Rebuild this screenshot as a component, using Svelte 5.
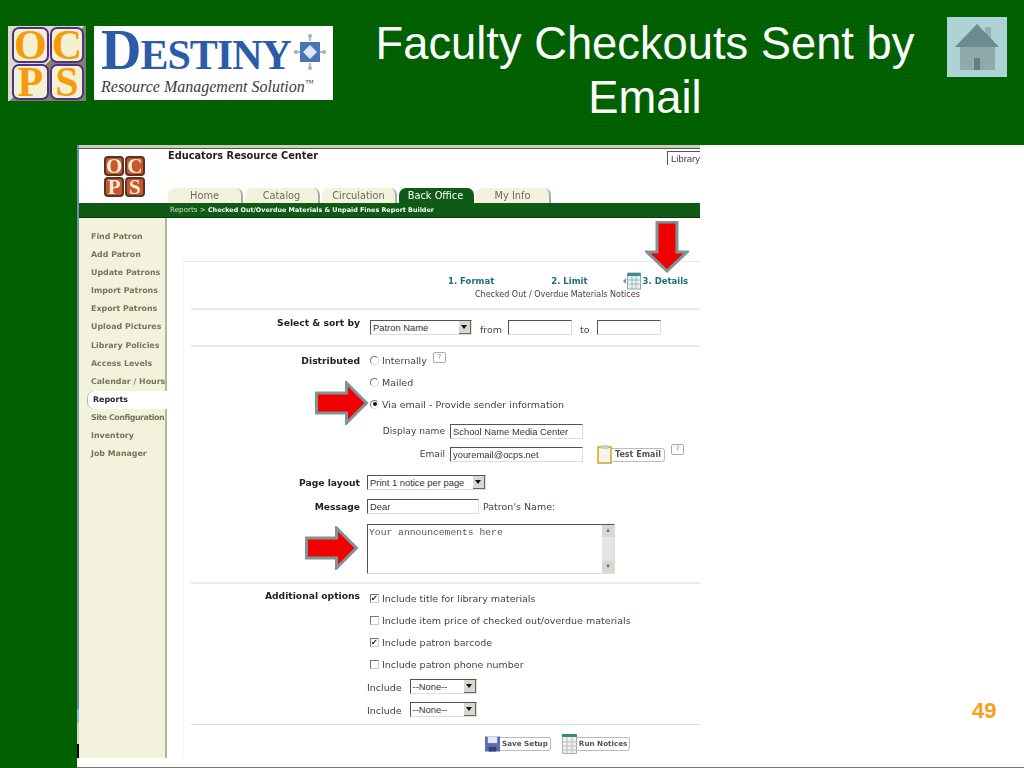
<script>
    const sideLinks = ['Find Patron', 'Add Patron', 'Update Patrons', 'Import Patrons', 'Export Patrons', 'Upload Pictures', 'Library Policies', 'Access Levels', 'Calendar / Hours', 'Reports', 'Site Configuration', 'Inventory', 'Job Manager'];
    const tabs = ['Home', 'Catalog', 'Circulation', 'Back Office', 'My Info'];
    const options = [
        { text: 'Include title for library materials', on: true },
        { text: 'Include item price of checked out/overdue materials', on: false },
        { text: 'Include patron barcode', on: true },
        { text: 'Include patron phone number', on: false }
    ];
</script>

<div class="slide">
    <header class="top">
        <div class="logos">
            <div class="ocps">
                <span>O</span><span>C</span><span>P</span><span>S</span>
            </div>
            <div class="destiny">
                <div class="word">
                    <span class="letters"><b>D</b>ESTINY</span>
                    <svg width="34" height="38" viewBox="0 0 34 38"><path d="M17 1v7M17 30v7M1 19h7M26 19h7" stroke="#8aa3cc" stroke-width="1.500"/><circle cx="17" cy="3" r="2" fill="#9db2d4"/><circle cx="17" cy="35" r="2" fill="#9db2d4"/><circle cx="3" cy="19" r="2" fill="#9db2d4"/><circle cx="31" cy="19" r="2" fill="#9db2d4"/><path d="M7 9h20v20H7z" fill="#4a74b8"/><path d="M17 12l7 7-7 7-7-7z" fill="#dfe7f3"/></svg>
                </div>
                <div class="tag">Resource Management Solution<sup>™</sup></div>
            </div>
        </div>
        <h1>Faculty Checkouts Sent by Email</h1>
        <div class="home">
            <svg width="60" height="60" viewBox="0 0 60 60">
                <rect width="60" height="60" fill="#add3d6"/>
                <path d="M38 10h6v12h-6z" fill="#8fb0b4"/>
                <path d="M13 30h35v23H13z" fill="#8fa9ac"/>
                <path d="M27 41h6v12h-6z" fill="#5f7f80"/>
                <path d="M30 7L52 30H8z" fill="#6d8a8e"/>
            </svg>
        </div>
    </header>

    <section class="panel">
        <div class="shot">
            <div class="strip"></div>
            <div class="mast">
                <div class="mini">
                    <span>O</span><span>C</span><span>P</span><span>S</span>
                </div>
                <div class="mast-right">
                    <div class="school">Educators Resource Center</div>
                    <div class="tabs">
                        {#each tabs as tab}
                            <div class="tab" class:active={tab === 'Back Office'}>{tab}</div>
                        {/each}
                    </div>
                </div>
                <div class="lib">Library</div>
            </div>
            <div class="crumb"><span>Reports &gt;</span><b>Checked Out/Overdue Materials &amp; Unpaid Fines Report Builder</b></div>

            <div class="body">
                <nav class="side">
                    {#each sideLinks as link}
                        <div class="link" class:current={link === 'Reports'} class:tight={link === 'Site Configuration'}>{link}</div>
                    {/each}
                </nav>

                <main class="card">
                    <div class="steps">
                        <div class="step-row">
                            <span class="step">1. Format</span>
                            <span class="step two">2. Limit</span>
                            <svg class="step-icon" width="18" height="18" viewBox="0 0 18 18"><path d="M4.500 1h13v16h-13z" fill="#e8f2f2" stroke="#8aa"/><path d="M4.500 1h13v3h-13z" fill="#3d8c8c"/><path d="M4.500 8h13M4.500 12h13M9 4v13M13 4v13" stroke="#9bb" fill="none"/><path d="M0 9l3-3v6z" fill="#6a9a9a"/></svg>
                            <span class="step">3. Details</span>
                        </div>
                        <div class="notice">Checked Out / Overdue Materials Notices</div>
                    </div>

                    <div class="row sort">
                        <div class="label">Select &amp; sort by</div>
                        <div class="ctrl">
                            <div class="select" style="width:102px">Patron Name<i></i></div>
                            <span class="txt from">from</span>
                            <div class="input" style="width:64px"></div>
                            <span class="txt to">to</span>
                            <div class="input" style="width:64px"></div>
                        </div>
                    </div>

                    <div class="row first h22">
                        <div class="label">Distributed</div>
                        <div class="ctrl"><span class="radio"></span><span class="txt">Internally</span><span class="help">?</span></div>
                    </div>
                    <div class="row h22">
                        <div class="label"></div>
                        <div class="ctrl"><span class="radio"></span><span class="txt">Mailed</span></div>
                    </div>
                    <div class="row h22">
                        <div class="label"></div>
                        <div class="ctrl"><span class="radio on"></span><span class="txt">Via email - Provide sender information</span></div>
                    </div>
                    <div class="row sub h20 gap6">
                        <div class="sublabel">Display name</div>
                        <div class="input val" style="width:133px">School Name Media Center</div>
                    </div>
                    <div class="row sub h20 gap3">
                        <div class="sublabel">Email</div>
                        <div class="input val" style="width:133px">youremail@ocps.net</div>
                        <div class="test">
                            <svg width="15" height="19" viewBox="0 0 15 19"><rect x="1" y="2" width="13" height="16" fill="#f4f4e8" stroke="#c9a227" stroke-width="1.500"/><rect x="4" y="0" width="7" height="4" fill="#ccc"/></svg>
                            <span class="btn">Test Email</span>
                        </div>
                        <span class="help up">?</span>
                    </div>
                    <div class="row h20 gap8">
                        <div class="label">Page layout</div>
                        <div class="ctrl narrow"><div class="select" style="width:119px">Print 1 notice per page<i></i></div></div>
                    </div>
                    <div class="row h20 gap4">
                        <div class="label">Message</div>
                        <div class="ctrl narrow"><div class="input val" style="width:112px">Dear</div><span class="txt name">Patron's Name:</span></div>
                    </div>
                    <div class="row area-row">
                        <div class="label"></div>
                        <div class="ctrl narrow">
                            <div class="area">Your announcements here<div class="scroll"><em>▲</em><em>▼</em></div></div>
                        </div>
                    </div>

                    <div class="opts">
                        <div class="label opt-label">Additional options</div>
                        {#each options as opt}
                            <div class="row h22">
                                <div class="label"></div>
                                <div class="ctrl"><span class="check" class:on={opt.on}>{opt.on ? '✔' : ''}</span><span class="txt">{opt.text}</span></div>
                            </div>
                        {/each}
                        <div class="row h23">
                            <div class="label"></div>
                            <div class="ctrl narrow"><span class="txt inc">Include</span><div class="select" style="width:67px">--None--<i></i></div></div>
                        </div>
                        <div class="row h23">
                            <div class="label"></div>
                            <div class="ctrl narrow"><span class="txt inc">Include</span><div class="select" style="width:67px">--None--<i></i></div></div>
                        </div>
                    </div>

                    <div class="foot">
                        <svg width="15" height="16" viewBox="0 0 16 16"><path d="M0 0h16v16H0z" fill="#5d6db5"/><path d="M3 0h10v7H3z" fill="#e6e8f4"/><path d="M4 11h8v5H4z" fill="#33407a"/></svg>
                        <span class="btn">Save Setup</span>
                        <svg class="run" width="15" height="20" viewBox="0 0 15 20"><path d="M.5.500h14v19H.5z" fill="#eef3ee" stroke="#aaa"/><path d="M0 0h15v3H0z" fill="#2f8f7a"/><path d="M0 8h15M0 12h15M0 16h15M5 3v17M10 3v17" stroke="#bbb"/></svg>
                        <span class="btn">Run Notices</span>
                    </div>
                </main>
            </div>
        </div>

        <!-- arrows sit on top of the screenshot -->
        <svg class="arrow down" width="44" height="52" viewBox="0 0 44 52"><path d="M12 1h20v30h10L22 50 2 31h10z" fill="#f00000" stroke="#7f9494" stroke-width="3"/></svg>
        <svg class="arrow right1" width="54" height="44" viewBox="0 0 54 44"><path d="M1.500 12h30V2l20 20-20 20V32h-30z" fill="#f00000" stroke="#7f9494" stroke-width="3"/></svg>
        <svg class="arrow right2" width="54" height="44" viewBox="0 0 54 44"><path d="M1.500 12h30V2l20 20-20 20V32h-30z" fill="#f00000" stroke="#7f9494" stroke-width="3"/></svg>
        <div class="num">49</div>
    </section>
</div>

<style>
    :global(body) {
        margin: 0;
    }

    .slide {
        width: 1024px;
        height: 768px;
        overflow: hidden;
        background-color: #006300;
        background-image: radial-gradient(circle, #005a00 1px, transparent 1.2px);
        background-size: 4px 4px;
        font-family: "DejaVu Sans", Verdana, sans-serif;
    }

    /* slide header */
    .top {
        height: 145px;
        display: flex;
        box-sizing: border-box;
    }

    .logos {
        display: flex;
        gap: 8px;
        padding: 26px 0 0 8px;
        width: 325px;
        flex: none;
    }

    .ocps {
        width: 78px;
        height: 75px;
        box-sizing: border-box;
        padding: 1px 4px 4px 4px;
        background: linear-gradient(135deg, #dcdccc 50%, #7f8468 50%);
        display: grid;
        grid-template-columns: 1fr 1fr;
        grid-template-rows: 1fr 1fr;
        gap: 1px;
        flex: none;
    }

    .ocps span {
        background: #f4f1d2;
        border: 2px solid #51308c;
        border-radius: 7px;
        color: #f79a0c;
        font: bold 42px/32px "Liberation Serif", serif;
        text-align: center;
    }

    .destiny {
        width: 239px;
        height: 74px;
        background: #fff;
        box-sizing: border-box;
        padding: 3px 0 0 7px;
        flex: none;
    }

    .word {
        display: flex;
        align-items: center;
        height: 46px;
    }

    .letters {
        color: #2c5ca8;
        font: bold 42px/46px "Liberation Serif", serif;
        letter-spacing: -1px;
        white-space: nowrap;
    }

    .letters b {
        font-size: 56px;
        line-height: 46px;
    }

    .word svg {
        margin-left: 2px;
        flex: none;
    }

    .tag {
        margin-top: 2px;
        font: italic 16px/20px "Liberation Serif", serif;
        color: #3b3b42;
        white-space: nowrap;
    }

    .tag sup {
        font-size: 9px;
        line-height: 0;
    }

    h1 {
        margin: 0 0 0 32px;
        width: 560px;
        padding-top: 17px;
        flex: none;
        box-sizing: border-box;
        color: #fff;
        font: 400 45.300px/54px "Liberation Sans", Arial, sans-serif;
        text-align: center;
    }

    .home {
        margin: 17px 0 0 22px;
        height: 60px;
    }

    /* white panel */
    .panel {
        position: relative;
        margin-left: 77px;
        width: 947px;
        height: 622px;
        background: #fff;
        border-bottom: 1px solid #777;
    }

    .shot {
        width: 623px;
        height: 613px;
        overflow: hidden;
        color: #4a3a4a;
        filter: blur(0.35px);
        box-sizing: border-box;
        border-left: 2px solid;
        border-image: linear-gradient(#6b8fa6 0 91.800%, #8fc0e0 91.800% 94.100%, #d8d8c0 94.100% 97.600%, #000 97.600%) 1;
        font-size: 9.500px;
    }

    .strip {
        height: 4px;
        background: #c9cfbc;
        border-bottom: 1px solid #555;
        box-sizing: border-box;
    }

    .mast {
        height: 54px;
        display: flex;
        position: relative;
    }

    .mini {
        width: 40px;
        height: 40px;
        margin: 7px 0 0 25px;
        display: grid;
        grid-template-columns: 1fr 1fr;
        grid-template-rows: 1fr 1fr;
        gap: 1px;
        flex: none;
    }

    .mini span {
        background: #c9572a;
        border: 2px solid #5a3324;
        border-radius: 4px;
        color: #f6eedd;
        font: bold 21px/16px "Liberation Serif", serif;
        text-align: center;
    }

    .mast-right {
        margin-left: 24px;
        display: flex;
        flex-direction: column;
        justify-content: space-between;
    }

    .school {
        font: bold 9.800px/12px "DejaVu Sans", sans-serif;
        color: #222;
        margin-top: 1px;
    }

    .tabs {
        display: flex;
        gap: 2px;
        height: 15px;
    }

    .tab {
        width: 75px;
        box-sizing: border-box;
        background: #f3f2dc;
        border-right: 2px solid #aaa;
        border-radius: 7px 7px 0 0;
        color: #6d6d5e;
        text-align: center;
        font-size: 9.800px;
        line-height: 15px;
    }

    .tab.active {
        background: #0f5a14;
        border-right-color: #0f5a14;
        color: #fff;
    }

    .lib {
        position: absolute;
        right: 0;
        top: 2px;
        width: 33px;
        height: 14px;
        box-sizing: border-box;
        border-left: 1px solid #555;
        border-top: 1px solid #555;
        font: 9.500px/13px "Liberation Sans", sans-serif;
        padding-left: 3px;
        overflow: hidden;
    }

    .crumb {
        height: 15px;
        background: #0f5a14;
        border-bottom: 1px solid #043a08;
        box-sizing: border-box;
        padding-left: 91px;
        color: #cfe0c8;
        font-size: 6.400px;
        line-height: 14px;
        white-space: nowrap;
    }

    .crumb span {
        font-size: 7.200px;
        margin-right: 2px;
    }

    .crumb b {
        color: #fff;
    }

    .body {
        display: flex;
        height: 540px;
    }

    .side {
        width: 88px;
        box-sizing: border-box;
        flex: none;
        background: #f3f2dc;
        border-right: 2px solid #b3b3a6;
        padding-top: 10px;
    }

    .link {
        height: 18.100px;
        line-height: 18px;
        padding-left: 12px;
        font-size: 7.900px;
        font-weight: bold;
        color: #77775a;
        white-space: nowrap;
    }

    .link.tight {
        letter-spacing: -0.45px;
    }

    .link.current {
        background: #fff;
        color: #222;
        margin: 0 -2px 0 8px;
        padding-left: 5px;
        border-radius: 7px 0 0 7px;
        border-left: 1px solid #b3b3a6;
    }

    /* form card */
    .card {
        margin: 43px 0 0 16px;
        width: 530px;
        flex: none;
        border-top: 1px solid #e6e6e6;
        border-left: 1px solid #f4f4f4;
        box-sizing: border-box;
    }

    .steps {
        height: 48px;
        margin-left: 7px;
        border-bottom: 2px solid #eaeaea;
        box-sizing: border-box;
        padding-top: 10px;
    }

    .step-row {
        display: flex;
        align-items: center;
        height: 17px;
        padding-left: 257px;
    }

    .step {
        color: #1c6f78;
        font-weight: bold;
        font-size: 8.500px;
        white-space: nowrap;
    }

    .two {
        margin: 0 35px 0 57px;
    }

    .step-icon {
        margin-right: 2px;
    }

    .notice {
        margin: 0 0 0 284px;
        font-size: 8px;
        line-height: 11px;
        white-space: nowrap;
    }

    .row {
        display: flex;
        align-items: center;
        white-space: nowrap;
    }

    .label {
        width: 176px;
        flex: none;
        text-align: right;
        font-weight: bold;
        color: #222;
        font-size: 9.200px;
    }

    .ctrl {
        display: flex;
        align-items: center;
        padding-left: 10px;
    }

    .ctrl.narrow {
        padding-left: 7px;
    }

    .sort {
        height: 37px;
        margin-left: 7px;
        border-bottom: 2px solid #eaeaea;
        box-sizing: border-box;
    }

    .sort .label {
        width: 169px;
        margin-bottom: 10px;
    }

    .first {
        margin-top: 2px;
    }

    .h20 { height: 20px; }
    .h22 { height: 22px; }
    .h23 { height: 23px; }
    .gap3 { margin-top: 3px; }
    .gap4 { margin-top: 4px; }
    .gap6 { margin-top: 6px; }
    .gap8 { margin-top: 8px; }

    .txt {
        font-size: 9.500px;
        color: #4a3a4a;
    }

    .from { margin: 3px 6px 0 8px; }
    .to { margin: 3px 7px 0 8px; }
    .name { margin-left: 4px; }
    .inc { margin: 2px 8px 0 0; }

    .select,
    .input {
        box-sizing: border-box;
        height: 15px;
        border: 1px solid #ddd;
        border-top-color: #555;
        border-left-color: #555;
        background: #fff;
        font: 9.400px/13px "Liberation Sans", sans-serif;
        padding-left: 2px;
        color: #333;
        position: relative;
        flex: none;
    }

    .select i {
        position: absolute;
        right: 0;
        top: 0;
        width: 12px;
        height: 13px;
        background: #d8d8d0;
        border-right: 1px solid #666;
        border-bottom: 1px solid #666;
        box-sizing: border-box;
    }

    .select i::after {
        content: '';
        position: absolute;
        left: 2px;
        top: 4px;
        border: 3px solid transparent;
        border-top: 4px solid #111;
    }

    .radio {
        width: 7px;
        height: 7px;
        border-radius: 50%;
        border: 1px solid #777;
        border-right-color: #ddd;
        border-bottom-color: #ddd;
        margin-right: 3px;
        position: relative;
        flex: none;
    }

    .radio.on::after {
        content: '';
        position: absolute;
        left: 1.500px;
        top: 1.500px;
        width: 4px;
        height: 4px;
        border-radius: 50%;
        background: #111;
    }

    .check {
        width: 7px;
        height: 7px;
        border: 1px solid #777;
        border-right-color: #ccc;
        border-bottom-color: #ccc;
        margin-right: 3px;
        font-size: 8px;
        line-height: 8px;
        color: #222;
        flex: none;
        overflow: hidden;
    }

    .help {
        width: 11px;
        height: 9px;
        margin: -6px 0 0 6px;
        border: 1px solid #aaa;
        border-radius: 2px;
        color: #888;
        font-size: 7px;
        line-height: 9px;
        text-align: center;
        flex: none;
    }

    .help.up {
        margin-top: -10px;
    }

    .sub .sublabel {
        width: 266px;
        flex: none;
        text-align: right;
        padding-right: 5px;
        box-sizing: border-box;
        font-size: 9.100px;
    }

    .test {
        display: flex;
        align-items: center;
        margin-left: 14px;
    }

    .test .btn {
        margin-top: 2px;
    }

    .btn {
        height: 14px;
        box-sizing: border-box;
        border: 1px solid #bbb;
        border-left: 0;
        border-radius: 0 3px 3px 0;
        padding: 0 3px;
        font-size: 8px;
        line-height: 12px;
        font-weight: bold;
        color: #555;
        white-space: nowrap;
    }

    .area-row {
        height: 66px;
        align-items: flex-start;
        padding-top: 8px;
        box-sizing: border-box;
    }

    .area {
        width: 248px;
        height: 50px;
        box-sizing: border-box;
        border: 1px solid #555;
        border-right-color: #ddd;
        border-bottom-color: #ddd;
        font: 9.700px/13px "Liberation Mono", monospace;
        padding: 1px 1px;
        color: #555;
        position: relative;
    }

    .scroll {
        position: absolute;
        right: 0;
        top: 0;
        bottom: 0;
        width: 12px;
        background: #e4e4e4;
        display: flex;
        flex-direction: column;
        justify-content: space-between;
    }

    .scroll em {
        font-size: 6px;
        line-height: 12px;
        height: 12px;
        text-align: center;
        font-style: normal;
        background: #d8d8d0;
        color: #666;
    }

    .opts {
        position: relative;
        margin-left: 7px;
        border-top: 2px solid #eaeaea;
        border-bottom: 1px solid #ddd;
        padding: 3px 0 3px;
    }

    .opts .label:not(.opt-label) {
        width: 169px;
    }

    .opt-label {
        position: absolute;
        left: 0;
        top: 6px;
        width: 169px;
    }

    .foot {
        display: flex;
        align-items: center;
        height: 37px;
        padding-left: 301px;
    }

    .foot .btn {
        font-size: 7.200px;
        padding: 0 2px;
    }

    .run {
        margin-left: 11px;
    }

    .arrow {
        position: absolute;
    }

    .down { left: 568px; top: 76px; }
    .right1 { left: 238px; top: 236px; }
    .right2 { left: 228px; top: 381px; }

    .num {
        position: absolute;
        left: 895px;
        top: 553px;
        color: #f7a11a;
        font: bold 22px/26px "Liberation Sans", Arial, sans-serif;
    }
</style>
